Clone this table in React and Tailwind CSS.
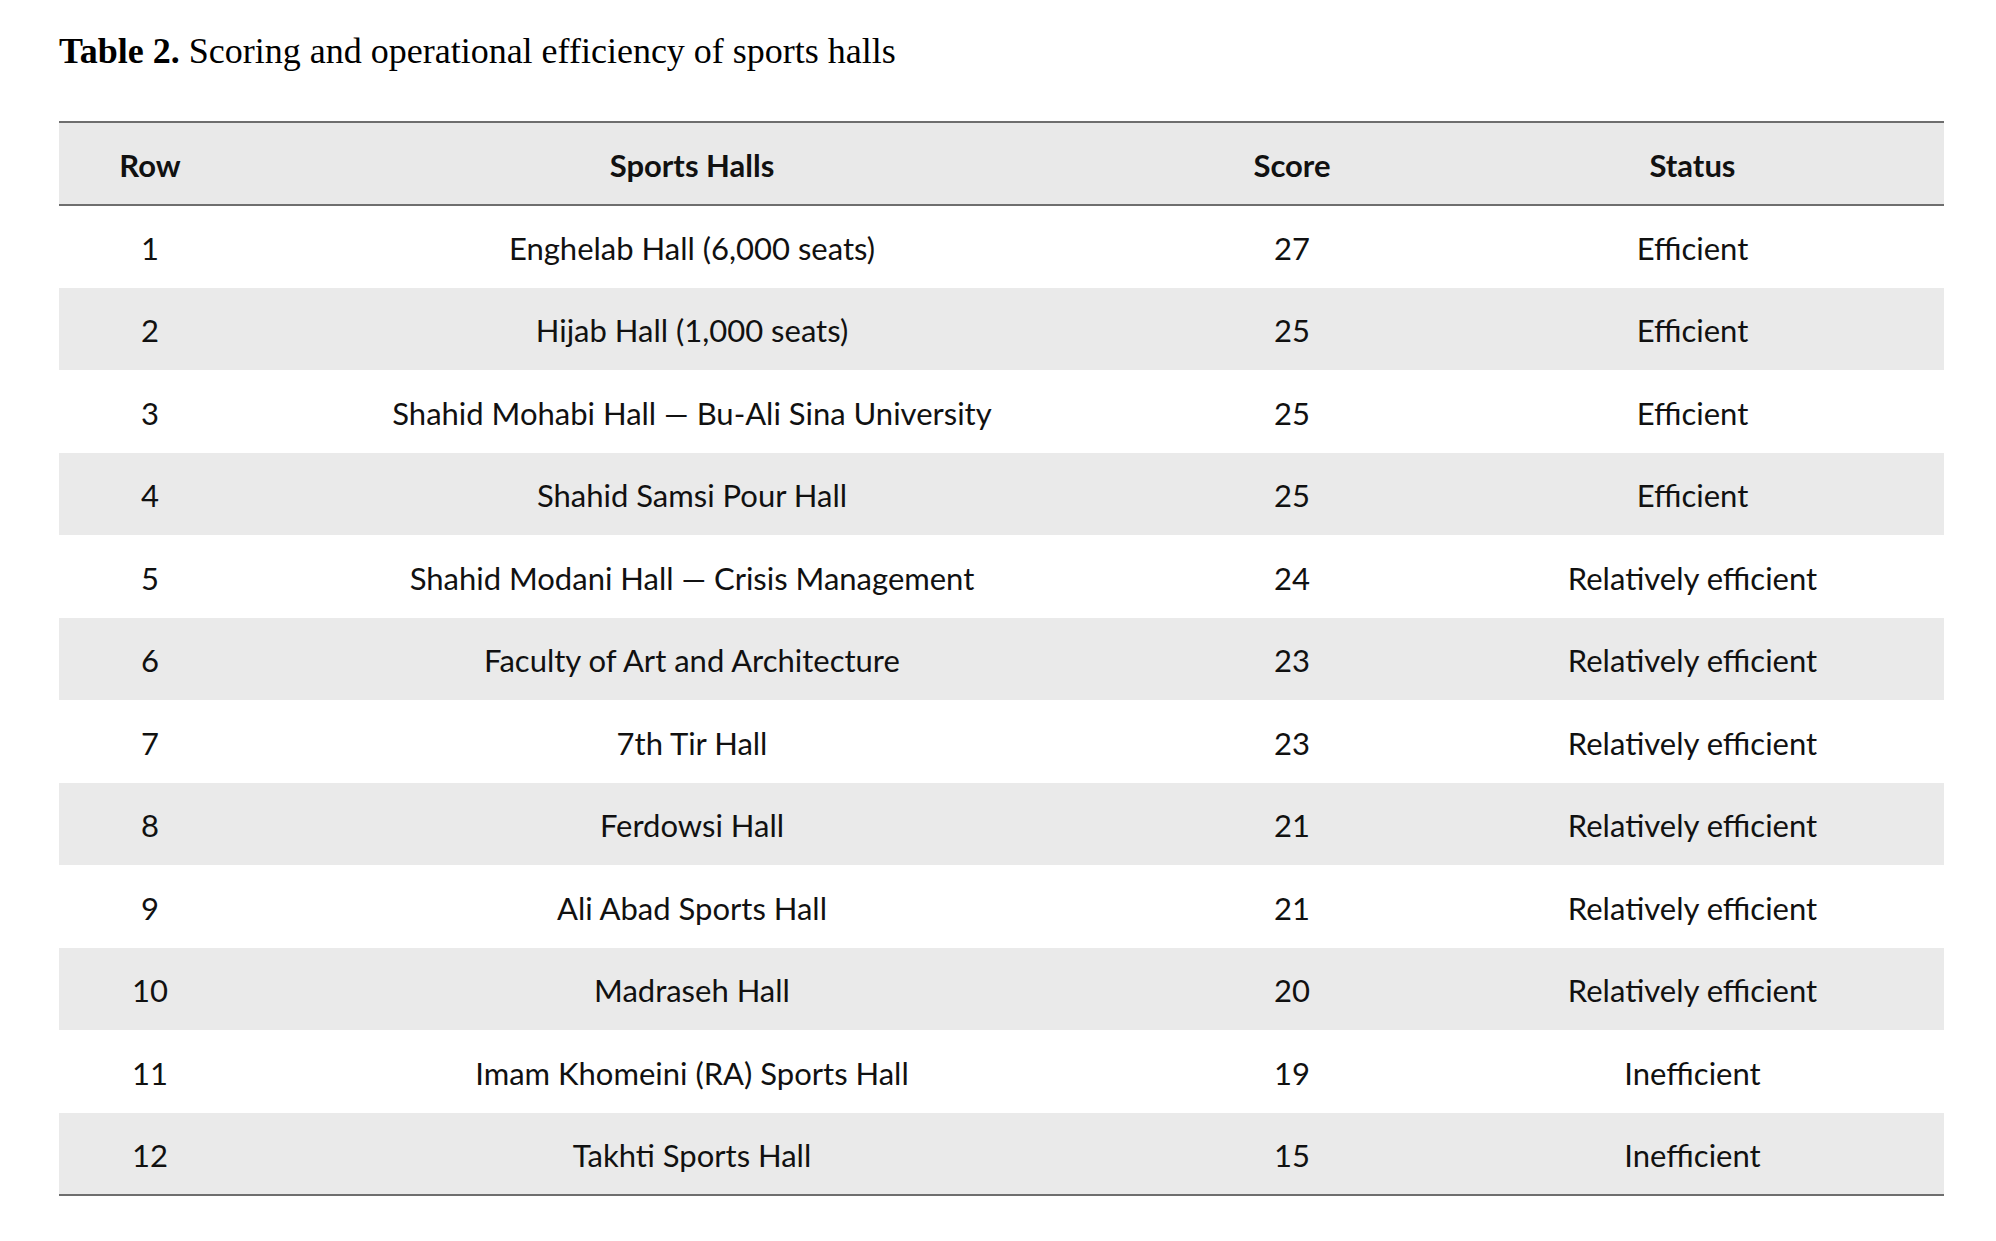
import React from "react";

const rows = [
  [1, "Enghelab Hall (6,000 seats)", 27, "Efficient"],
  [2, "Hijab Hall (1,000 seats)", 25, "Efficient"],
  [3, "Shahid Mohabi Hall — Bu-Ali Sina University", 25, "Efficient"],
  [4, "Shahid Samsi Pour Hall", 25, "Efficient"],
  [5, "Shahid Modani Hall — Crisis Management", 24, "Relatively efficient"],
  [6, "Faculty of Art and Architecture", 23, "Relatively efficient"],
  [7, "7th Tir Hall", 23, "Relatively efficient"],
  [8, "Ferdowsi Hall", 21, "Relatively efficient"],
  [9, "Ali Abad Sports Hall", 21, "Relatively efficient"],
  [10, "Madraseh Hall", 20, "Relatively efficient"],
  [11, "Imam Khomeini (RA) Sports Hall", 19, "Inefficient"],
  [12, "Takhti Sports Hall", 15, "Inefficient"],
];

const App = () => {
  return (
    <div className="min-h-[1241px] w-[1996px] bg-white pl-[59px] pt-[33px]">
      <h1 className="font-['Liberation_Serif',serif] text-[36px] leading-[36px] text-black">
        <span className="font-bold">Table 2.</span> Scoring and operational efficiency of sports halls
      </h1>

      <table className="mt-[52px] w-[1885px] table-fixed border-collapse font-['Lato',sans-serif] text-[31px] text-[#111]">
        <colgroup>
          <col className="w-[182px]" />
          <col className="w-[902px]" />
          <col className="w-[298px]" />
          <col className="w-[503px]" />
        </colgroup>
        <thead>
          <tr className="h-[83px] border-y-2 border-[#6e6e6e] bg-[#e9e9e9]">
            <th className="pt-[3px] text-center font-bold">Row</th>
            <th className="pt-[3px] text-center font-bold">Sports Halls</th>
            <th className="pt-[3px] text-center font-bold">Score</th>
            <th className="pt-[3px] text-center font-bold">Status</th>
          </tr>
        </thead>
        <tbody className="border-b-2 border-[#6e6e6e]">
          {rows.map((r, i) => (
            <tr
              key={r[0]}
              className={
                i % 2 === 1 ? "h-[82.5px] bg-[#eaeaea]" : "h-[82.5px] bg-white"
              }
            >
              <td className="pt-[3px] text-center">{r[0]}</td>
              <td className="pt-[3px] text-center">{r[1]}</td>
              <td className="pt-[3px] text-center">{r[2]}</td>
              <td className="pt-[3px] text-center">{r[3]}</td>
            </tr>
          ))}
        </tbody>
      </table>
    </div>
  );
};

export default App;
